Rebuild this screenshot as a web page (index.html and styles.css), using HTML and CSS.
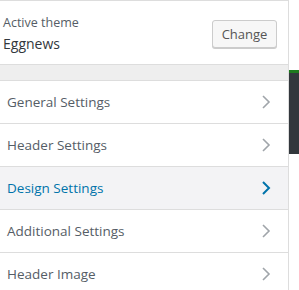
FILE: index.html
```html
<!DOCTYPE html>
<html lang="en">
<head>
    <meta charset="UTF-8">
    <meta name="viewport" content="width=device-width, initial-scale=1.0">
    <title>Customizer</title>
    <link rel="stylesheet" href="styles.css">
</head>
<body>
    <div class="panel">
        <div class="theme-info">
            <div class="theme-text">
                <span class="theme-label">Active theme</span>
                <span class="theme-name">Eggnews</span>
            </div>
            <button class="change-btn">Change</button>
        </div>
        <div class="spacer"></div>
        <ul class="sections">
            <li class="section">General Settings <svg class="chev" viewBox="0 0 10 16"><path d="M2 2l6 6-6 6"/></svg></li>
            <li class="section">Header Settings <svg class="chev" viewBox="0 0 10 16"><path d="M2 2l6 6-6 6"/></svg></li>
            <li class="section active">Design Settings <svg class="chev" viewBox="0 0 10 16"><path d="M2 2l6 6-6 6"/></svg></li>
            <li class="section">Additional Settings <svg class="chev" viewBox="0 0 10 16"><path d="M2 2l6 6-6 6"/></svg></li>
            <li class="section">Header Image <svg class="chev" viewBox="0 0 10 16"><path d="M2 2l6 6-6 6"/></svg></li>
        </ul>
    </div>
    <div class="preview">
        <div class="preview-bar"></div>
    </div>
</body>
</html>
```

FILE: styles.css
```css
body, html {
    margin: 0;
    padding: 0;
    background-color: #fff;
    font-family: "Open Sans", sans-serif;
    color: #555d66;
}

body {
    display: flex;
    height: 290px;
    overflow: hidden;
}

.panel {
    width: 288px;
    flex-shrink: 0;
    border-right: 1px solid #ddd;
    background-color: #fff;
}

.theme-info {
    display: flex;
    align-items: center;
    justify-content: space-between;
    border-top: 1px solid #ddd;
    border-bottom: 1px solid #ddd;
    padding: 0 11px 0 3px;
    box-sizing: border-box;
    height: 65px;
}

.theme-text {
    display: flex;
    flex-direction: column;
    margin-top: 2px;
}

.theme-label {
    font-size: 12.5px;
    line-height: 20px;
}

.theme-name {
    font-size: 14px;
    line-height: 22px;
    color: #32373c;
}

.change-btn {
    font-family: "Open Sans", sans-serif;
    font-size: 13px;
    color: #555;
    background-color: #f7f7f7;
    border: 1px solid #ccc;
    border-radius: 3px;
    box-shadow: 0 1px 0 #ccc;
    width: 65px;
    height: 28px;
    padding: 0;
    margin-top: 3px;
}

.spacer {
    height: 15px;
    background-color: #eee;
    border-bottom: 1px solid #ddd;
}

.sections {
    list-style: none;
    margin: 0;
    padding: 0;
}

.section {
    display: flex;
    align-items: center;
    justify-content: space-between;
    height: 42px;
    padding: 0 17px 0 7px;
    border-bottom: 1px solid #ddd;
    font-size: 13.5px;
    background-color: #fff;
}

.section.active {
    background-color: #f3f3f5;
    color: #0073aa;
}

.chev {
    width: 10px;
    height: 16px;
    fill: none;
    stroke: #a0a5aa;
    stroke-width: 1.6;
}

.section.active .chev {
    stroke: #0073aa;
    stroke-width: 2;
}

.preview {
    flex: 1;
    padding-top: 70px;
}

.preview-bar {
    height: 81px;
    background-color: #32373c;
    border-top: 3px solid #1e7a1e;
}
```
